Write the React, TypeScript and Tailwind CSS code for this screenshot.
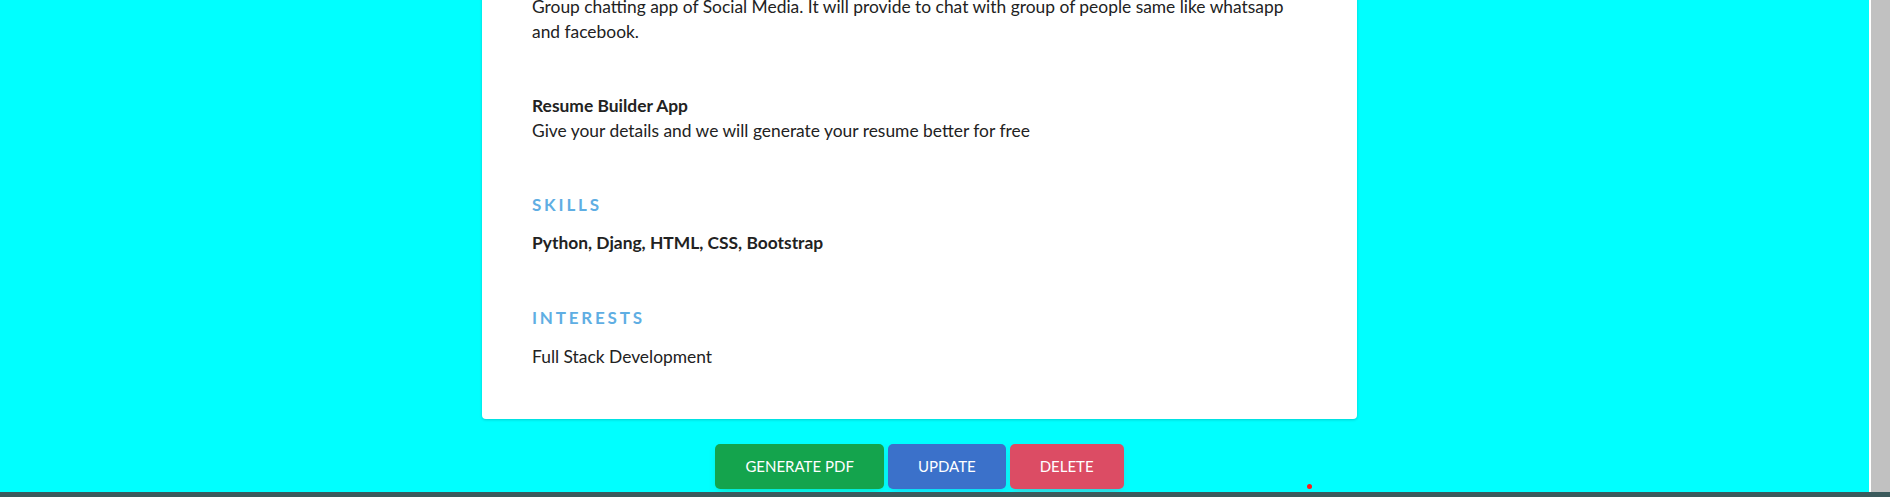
import React from "react";

const body = "text-[17.4px] leading-[24.5px] text-[#222]";

function SectionTitle({ children }: { children: React.ReactNode }) {
  return (
    <h3 className="text-[17px] leading-[24px] font-bold tracking-[2.8px] uppercase text-[#5faee3]">
      {children}
    </h3>
  );
}

export default function App() {
  return (
    <div className="flex h-[497px] w-[1890px] flex-col overflow-hidden bg-[#00ffff] font-['Lato',sans-serif]">
      <div className="relative flex h-[492px]">
        <div className="flex-1 overflow-hidden">
          <div className="flex w-[1839px] flex-col items-center">
            <div className="-mt-[5px] w-[875px] rounded-b-[4px] bg-white px-[50px] pb-[50px] shadow-[0_1px_3px_rgba(0,0,0,0.18)]">
              <p className={body}>
                Group chatting app of Social Media. It will provide to chat with group of people same like whatsapp
                and facebook.
              </p>
              <div className="mt-[50px]">
                <p className={`${body} font-bold`}>Resume Builder App</p>
                <p className={body}>Give your details and we will generate your resume better for free</p>
              </div>

              <div className="mt-[50px]">
                <SectionTitle>Skills</SectionTitle>
                <p className={`${body} mt-[14px] font-bold`}>Python, Djang, HTML, CSS, Bootstrap</p>
              </div>

              <div className="mt-[50px]">
                <SectionTitle>Interests</SectionTitle>
                <p className={`${body} mt-[15px]`}>Full Stack Development</p>
              </div>
            </div>

            <div className="mt-[25px] flex gap-[4px]">
              <button className="h-[45px] rounded-[5px] bg-[#14a44d] px-[30px] text-[15px] uppercase text-white shadow-[0_4px_9px_-4px_rgba(20,164,77,0.5)]">
                Generate PDF
              </button>
              <button className="h-[45px] rounded-[5px] bg-[#3b71ca] px-[30px] text-[15px] uppercase text-white shadow-[0_4px_9px_-4px_rgba(59,113,202,0.5)]">
                Update
              </button>
              <button className="h-[45px] rounded-[5px] bg-[#dc4c64] px-[30px] text-[15px] uppercase text-white shadow-[0_4px_9px_-4px_rgba(220,76,100,0.5)]">
                Delete
              </button>
            </div>
          </div>
        </div>
        <div className="w-[21px] border-l-2 border-white bg-[#c1c1c1]" />
        <span className="absolute left-[1307px] top-[484px] h-[5px] w-[5px] rounded-full bg-[#ff1a1a]" />
      </div>
      <div className="h-[5px] bg-[#3b5a5c]" />
    </div>
  );
}
